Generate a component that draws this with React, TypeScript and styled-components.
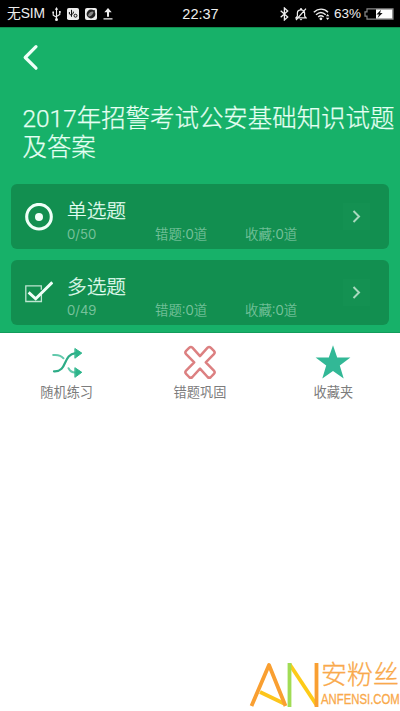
import React from "react";
import styled, { createGlobalStyle } from "styled-components";

const GlobalStyle = createGlobalStyle`
  * { box-sizing: border-box; }
  body { margin: 0; background: #fff; }
  svg { display: block; flex: none; }
`;

const Screen = styled.div`
  width: 400px;
  height: 711px;
  display: flex;
  flex-direction: column;
  overflow: hidden;
  background: #fff;
  font-family: Roboto, "Noto Sans CJK SC", sans-serif;
`;

const StatusBar = styled.header`
  flex: none;
  height: 27px;
  padding: 1px 6px 0 7px;
  display: grid;
  grid-template-columns: 1fr auto 1fr;
  align-items: center;
  background: #000;
  color: #eee;
  font: 14px/20px "Liberation Sans", "Noto Sans CJK SC", sans-serif;
`;

const StatusGroup = styled.div<{ $end?: boolean }>`
  display: flex;
  align-items: center;
  justify-content: ${(p) => (p.$end ? "flex-end" : "flex-start")};
`;

const Carrier = styled.span`
  width: 44px;
  font-size: 13.8px;
  letter-spacing: -0.1px;
  white-space: nowrap;
`;

const Clock = styled.span`
  font-size: 14.5px;
`;

const Percent = styled.span`
  width: 28px;
  font-size: 13.5px;
  margin: 0 2px 0 4px;
  white-space: nowrap;
`;

const Hero = styled.section`
  flex: none;
  height: 306px;
  display: flex;
  flex-direction: column;
  background: #17b169;
  border-top: 1px solid #108d50;
  border-bottom: 1px solid #129c5b;
`;

const BackButton = styled.button`
  width: 60px;
  height: 58px;
  padding: 0 0 0 22px;
  display: flex;
  align-items: center;
  border: 0;
  background: none;
`;

const Title = styled.h1`
  margin: 18px 0 0 22.5px;
  height: 80px;
  color: #e6fff3;
  font-size: 24.45px;
  font-weight: 300;
  line-height: 29px;
  white-space: nowrap;
  -webkit-text-stroke: 0.25px #e6fff3;
`;

const CardList = styled.div`
  display: flex;
  flex-direction: column;
  gap: 11px;
  padding: 0 11px;
`;

const Card = styled.article`
  height: 65px;
  display: flex;
  padding-left: 14px;
  border-radius: 6px;
  background: #128f50;
`;

const CardIcon = styled.div`
  width: 42px;
  display: flex;
  align-items: center;
`;

const CardBody = styled.div`
  width: 276px;
  padding-top: 15px;
`;

const CardName = styled.h2`
  margin: 0;
  color: #e6fff3;
  font-size: 19.7px;
  font-weight: 300;
  line-height: 26px;
  -webkit-text-stroke: 0.25px #e6fff3;
`;

const Stats = styled.div`
  display: grid;
  grid-template-columns: 88px 90px 1fr;
  color: #80c6a2;
  font-family: Inter, "Noto Sans CJK SC", sans-serif;
  font-size: 13.4px;
  font-weight: 300;
  line-height: 18px;
  -webkit-text-stroke: 0.15px #80c6a2;
`;

const OpenButton = styled.button`
  width: 27px;
  height: 27px;
  margin-top: 19px;
  padding: 0;
  display: flex;
  align-items: center;
  justify-content: center;
  border: 0;
  background: #149152;
`;

const Actions = styled.nav`
  display: grid;
  grid-template-columns: repeat(3, 1fr);
  padding-top: 11px;
`;

const Action = styled.div`
  display: flex;
  flex-direction: column;
  align-items: center;
  color: #7c7c7c;
  font-size: 13.2px;
  line-height: 20px;
  gap: 3px;
`;

const Brand = styled.footer`
  margin-top: auto;
  display: flex;
  height: 52px;
  padding-left: 249px;
  color: #f9a94b;
`;

const BrandText = styled.div`
  display: flex;
  flex-direction: column;
  width: 79px;
`;

const BrandName = styled.span`
  font-size: 26px;
  font-weight: 300;
  line-height: 32px;
  white-space: nowrap;
  -webkit-text-stroke: 0.3px #f9a94b;
`;

const BrandSite = styled.span`
  width: max-content;
  font: 14px/16px "Liberation Sans", sans-serif;
  transform: scaleX(0.81);
  transform-origin: left;
  white-space: nowrap;
  -webkit-text-stroke: 0.3px #f9a94b;
`;

const UsbIcon = () => (
  <svg width="9" height="14" viewBox="0 0 9 14" fill="none" stroke="#eee" strokeWidth="1.1">
    <path d="M4.5 2v10M1.2 5.5v2.7l3.3 2M7.8 5v2.5l-3.3 2" />
    <path d="M4.5 0 6.2 2.8H2.8ZM.4 4.5H2v1.7H.4ZM7 4h1.7v1.7H7Z" fill="#eee" stroke="none" />
    <circle cx="4.5" cy="12.4" r="1.5" fill="#eee" stroke="none" />
  </svg>
);

const LinkBadge = () => (
  <svg width="12" height="12" viewBox="0 0 12 12">
    <rect width="12" height="12" rx="1.8" fill="#eee" />
    <path d="M4.5 1.8v7M2.4 4v2l2.1 1.5M6.3 3.6v1.7L4.5 6.7" fill="none" stroke="#111" />
    <circle cx="8.5" cy="7.7" r="1.5" fill="none" stroke="#111" />
  </svg>
);

const LensBadge = () => (
  <svg width="12" height="12" viewBox="0 0 12 12">
    <rect width="12" height="12" rx="2" fill="#eee" />
    <circle cx="6" cy="6" r="4.4" fill="#222" />
    <path d="M3 7.6c.6-3 3-4.2 5.6-4-.2 2.6-2 4.6-4.6 5Z" fill="#888" />
    <circle cx="9" cy="3" r="1" fill="#222" />
  </svg>
);

const UploadIcon = () => (
  <svg width="10" height="12" viewBox="0 0 10 12" fill="#eee">
    <path d="M5 0 8.7 4.2H6v4.6H4V4.2H1.3ZM.5 10.2h9v1.4h-9Z" />
  </svg>
);

const LeftIcons = styled.div`
  display: flex;
  align-items: center;
  gap: 6px;
  margin-left: 1px;
`;

const RightIcons = styled.div`
  display: flex;
  align-items: center;
  gap: 6px;
`;

const BluetoothIcon = () => (
  <svg width="9" height="14" viewBox="0 0 9 14" fill="none" stroke="#eee" strokeWidth="1.3">
    <path d="M.7 3.8 7.7 10 4.4 13V1l3.3 3-7 6.2" />
  </svg>
);

const MutedBellIcon = () => (
  <svg width="12" height="13" viewBox="0 0 12 13" fill="none" stroke="#eee" strokeWidth="1.2">
    <path d="M1 9.8h10L9.6 8V5C9.6 3 8 1.9 6 1.9S2.4 3 2.4 5v3ZM5 .9h2M1 12 11 .7" />
    <path d="M4.6 11h2.8L6 12.6Z" fill="#eee" stroke="none" />
  </svg>
);

const WifiIcon = () => (
  <svg width="17" height="13" viewBox="0 0 17 13" fill="none" stroke="#eee" strokeWidth="1.4">
    <path d="M.8 4.2c4.4-4.1 10.2-4.1 14.2 0M3 6.7c3-2.8 6.8-2.8 9.7 0M5.2 9c1.6-1.5 3.8-1.5 5.4 0" />
    <circle cx="7.9" cy="10.8" r="1.4" fill="#eee" stroke="none" />
    <path d="m14.6 6 1.7 2.3h-3.4ZM14.6 12l1.7-2.3h-3.4Z" fill="#eee" stroke="none" />
  </svg>
);

const BatteryIcon = () => (
  <svg width="30" height="12" viewBox="0 0 30 12">
    <path d="M3 .8h26v10.4H3V8.2H1V3.8h2Z" fill="#000" stroke="#888" strokeWidth="1.2" />
    <path d="M12 1.4h16.4v9.2H12Z" fill="#fff" />
    <path d="m17 1.8-4.6 4.7H15L13.6 10l5-5h-2.5Z" fill="#111" />
  </svg>
);

const BackIcon = () => (
  <svg width="17" height="27" viewBox="0 0 17 27" fill="none" stroke="#effff8" strokeWidth="3.2" strokeLinecap="round" strokeLinejoin="round">
    <path d="M14 2.7 3.2 13.5 14 24.2" />
  </svg>
);

const RadioIcon = () => (
  <svg width="28" height="28" viewBox="0 0 28 28">
    <circle cx="14" cy="13.7" r="12.3" fill="none" stroke="#effff8" strokeWidth="3.1" />
    <circle cx="14" cy="14" r="4" fill="#effff8" />
  </svg>
);

const CheckIcon = () => (
  <svg width="28" height="28" viewBox="0 0 28 28" fill="none">
    <path d="M16.3 10.8V6.9H.8v15.6h15.6v-7" stroke="#bde5d0" strokeWidth="1.3" />
    <path d="m3.6 13.4 7.1 6.4L27.3 3.3" stroke="#effff8" strokeWidth="2.9" />
  </svg>
);

const ChevronIcon = () => (
  <svg width="9" height="14" viewBox="0 0 9 14" fill="none" stroke="#a9d9be" strokeWidth="2">
    <path d="M1.5 1 7 6.5 1.5 12" />
  </svg>
);

const ShuffleIcon = () => (
  <svg width="36" height="36" viewBox="0 0 36 36" fill="none" strokeLinecap="round">
    <path d="M4.2 11c5-.5 8 .4 10.3 3.3M19.5 24.2c1.6 3 3.8 4.4 7 4.3" stroke="#62c9ac" strokeWidth="2" />
    <path d="M5 27.3c14 .8 8.3-16.9 21.5-18.2" stroke="#2dac87" strokeWidth="2.2" />
    <path d="m26.2 4.7 6.6 4.4-6.6 4.9ZM26.2 23.9l6.6 4.4-6.6 4.8Z" fill="#2db58b" stroke="#2db58b" strokeLinejoin="round" />
  </svg>
);

const WrongIcon = () => (
  <svg width="36" height="36" viewBox="0 0 36 36" fill="none" stroke="#dc8081" strokeWidth="2.5" strokeLinejoin="round">
    <path d="M18 12.1 25.6 3.7q1.6-1.5 3.3.2l3 3q1.5 1.6 0 3.2l-8.1 8.2 8.1 8.4q1.5 1.6 0 3.2l-3 3.1q-1.7 1.6-3.3 0L18 24.6 10.4 33q-1.6 1.6-3.3 0l-3-3.1q-1.5-1.6 0-3.2l8.1-8.4-8.1-8.2q-1.5-1.6 0-3.2l3-3q1.7-1.7 3.3-.2Z" />
  </svg>
);

const StarIcon = () => (
  <svg width="36" height="36" viewBox="0 0 36 36" fill="#32b896">
    <path d="m18 1.2 4.2 12.4h13.2L24.8 21.5l3.9 13L18 26.9 7.3 34.5l3.9-13L.6 13.6h13.2Z" />
  </svg>
);

const BrandMark = () => (
  <svg width="72" height="52" viewBox="0 0 72 52" fill="none" strokeWidth="3.8">
    <path d="m11 33 24 11.5" stroke="#fcc51c" />
    <path d="m40.5 5 27 41" stroke="#fdcb18" />
    <path d="M40.5 4v44" stroke="#a1dc55" />
    <path d="M2.5 47 20 6l16.5 41" stroke="#f99f31" strokeLinejoin="round" />
    <path d="M67.5 4v44" stroke="#f99f31" />
  </svg>
);

const sections = [
  { name: "单选题", count: "0/50", icon: <RadioIcon /> },
  { name: "多选题", count: "0/49", icon: <CheckIcon /> },
];

const actions = [
  { label: "随机练习", icon: <ShuffleIcon /> },
  { label: "错题巩固", icon: <WrongIcon /> },
  { label: "收藏夹", icon: <StarIcon /> },
];

export default function App() {
  return (
    <>
      <GlobalStyle />
      <Screen>
        <StatusBar>
          <StatusGroup>
            <Carrier>无SIM</Carrier>
            <LeftIcons>
              <UsbIcon />
              <LinkBadge />
              <LensBadge />
              <UploadIcon />
            </LeftIcons>
          </StatusGroup>
          <Clock>22:37</Clock>
          <StatusGroup $end>
            <RightIcons>
              <BluetoothIcon />
              <MutedBellIcon />
              <WifiIcon />
            </RightIcons>
            <Percent>63%</Percent>
            <BatteryIcon />
          </StatusGroup>
        </StatusBar>
        <Hero>
          <BackButton aria-label="返回">
            <BackIcon />
          </BackButton>
          <Title>
            2017年招警考试公安基础知识试题
            <br />
            及答案
          </Title>
          <CardList>
            {sections.map((s) => (
              <Card key={s.name}>
                <CardIcon>{s.icon}</CardIcon>
                <CardBody>
                  <CardName>{s.name}</CardName>
                  <Stats>
                    <span>{s.count}</span>
                    <span>错题:0道</span>
                    <span>收藏:0道</span>
                  </Stats>
                </CardBody>
                <OpenButton aria-label={s.name}>
                  <ChevronIcon />
                </OpenButton>
              </Card>
            ))}
          </CardList>
        </Hero>
        <Actions>
          {actions.map((a) => (
            <Action key={a.label}>
              {a.icon}
              <span>{a.label}</span>
            </Action>
          ))}
        </Actions>
        <Brand>
          <BrandMark />
          <BrandText>
            <BrandName>安粉丝</BrandName>
            <BrandSite>ANFENSI.COM</BrandSite>
          </BrandText>
        </Brand>
      </Screen>
    </>
  );
}
